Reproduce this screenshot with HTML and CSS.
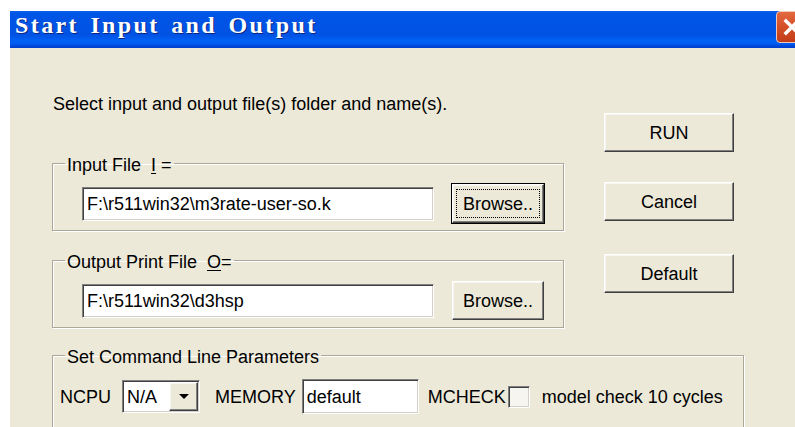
FILE: index.html
```html
<!DOCTYPE html>
<html>
<head>
<meta charset="utf-8">
<title>Start Input and Output</title>
<link rel="stylesheet" href="styles.css">
</head>
<body>
<div class="window">
  <div class="titlebar">
    <span class="title">Start Input and Output</span>
    <span class="close">
      <svg width="32" height="32" viewBox="0 0 32 32">
        <path d="M9.5 9.5 L22.5 22.5 M22.5 9.5 L9.5 22.5" stroke="#fff" stroke-width="3.6" stroke-linecap="square" fill="none"/>
      </svg>
    </span>
  </div>
  <div class="client">
    <div class="top">
      <div class="files">
        <p class="intro">Select input and output file(s) folder and name(s).</p>
        <fieldset class="group file-group">
          <legend>Input File&nbsp; <u>I</u> =</legend>
          <div class="file-row">
            <div class="edit path">F:\r511win32\m3rate-user-so.k</div>
            <div class="btn browse default"><span class="focus-ring">Browse..</span></div>
          </div>
        </fieldset>
        <fieldset class="group file-group">
          <legend>Output Print File&nbsp; <u>O</u>=</legend>
          <div class="file-row">
            <div class="edit path">F:\r511win32\d3hsp</div>
            <div class="btn browse">Browse..</div>
          </div>
        </fieldset>
      </div>
      <div class="actions">
        <div class="btn action">RUN</div>
        <div class="btn action cancel">Cancel</div>
        <div class="btn action reset">Default</div>
      </div>
    </div>
    <fieldset class="group params">
      <legend>Set Command Line Parameters</legend>
      <div class="param-row">
        <span class="plabel">NCPU</span>
        <div class="combo">
          <span class="combo-value">N/A</span>
          <span class="btn combo-btn">
            <svg width="10" height="6" viewBox="0 0 10 6"><polygon points="0,0 10,0 5,5" fill="#000"/></svg>
          </span>
        </div>
        <span class="plabel mem-label">MEMORY</span>
        <div class="edit mem">default</div>
        <span class="plabel mcheck">MCHECK</span>
        <span class="checkbox"></span>
        <span class="check-text">model check 10 cycles</span>
      </div>
    </fieldset>
  </div>
</div>
</body>
</html>
```
FILE: styles.css
```css
* {
  box-sizing: border-box;
}

html,
body {
  margin: 0;
  padding: 0;
  overflow: hidden;
  background: #fff;
}

body {
  font-family: "Liberation Sans", Arial, sans-serif;
  font-size: 18px;
  color: #000;
}

/* dialog frame */
.window {
  margin: 11px 0 0 10px;
  width: 802px;
  height: 430px;
  background: #ece9d8;
}

.titlebar {
  display: flex;
  height: 37px;
  background: linear-gradient(to bottom,
    #0a5fec 0, #0055e6 3px, #0052e2 24px, #0060f4 29px,
    #005cf0 33px, #0046d6 35px, #003fcf 37px);
}

.title {
  padding: 2px 0 0 5px;
  line-height: 24px;
  font-family: "Liberation Serif", "Times New Roman", serif;
  font-weight: bold;
  font-size: 24px;
  letter-spacing: 2.4px;
  word-spacing: 3px;
  color: #fff;
  text-shadow: 1px 1px 0 #0a2680;
  white-space: pre;
}

.close {
  margin-left: auto;
  margin-right: 4px;
  width: 32px;
  height: 32px;
  border: 1px solid #f0c8b8;
  border-radius: 4px;
  background: linear-gradient(to bottom, #e2683f, #d14b24 60%, #c23c18);
  display: flex;
  align-items: center;
  justify-content: center;
}

.close svg {
  display: block;
}

/* client area */
.client {
  padding: 46px 0 0 42px;
}

.top {
  display: flex;
  align-items: flex-start;
}

.files {
  width: 512px;
}

.intro {
  margin: 0 0 37px 1px;
  line-height: 20px;
}

/* etched group box */
.group {
  margin: 0;
  min-width: 0;
  padding: 9px 0 7px;
  border: 1px solid #aca899;
  box-shadow: 1px 1px 0 #fff, inset 1px 1px 0 #fff;
}

.group legend {
  margin-left: 12px;
  padding: 4px 2px 0;
  line-height: 20px;
}

.group u {
  text-underline-offset: 2px;
}

.file-group + .file-group {
  margin-top: 17px;
}

.file-row {
  display: flex;
  align-items: center;
  height: 39px;
  margin-left: 29px;
}

/* sunken edit field */
.edit {
  display: flex;
  align-items: center;
  height: 34px;
  padding: 0 4px;
  line-height: 20px;
  white-space: nowrap;
  background: #fff;
  border: 1px solid;
  border-color: #808080 #fff #fff #808080;
  box-shadow: inset 1px 1px 0 #404040, inset -1px -1px 0 #d4d0c8;
}

.path {
  width: 352px;
}

/* raised push button */
.btn {
  display: flex;
  align-items: center;
  justify-content: center;
  line-height: 20px;
  background: #ece9d8;
  border: 1px solid;
  border-color: #fff #404040 #404040 #fff;
  box-shadow: inset -1px -1px 0 #808080, inset 1px 1px 0 #f7f6f0;
}

.btn.default {
  box-shadow: 0 0 0 1px #000, inset -1px -1px 0 #808080, inset 1px 1px 0 #f7f6f0;
}

.focus-ring {
  flex: 1;
  align-self: stretch;
  display: flex;
  align-items: center;
  justify-content: center;
  margin: 4px 3px;
  border: 1px dotted #000;
}

.browse {
  width: 92px;
  height: 39px;
  margin-left: 18px;
}

.actions {
  display: flex;
  flex-direction: column;
  margin-left: 40px;
  padding-top: 19px;
}

.action {
  width: 130px;
  height: 39px;
}

.cancel {
  margin-top: 30px;
}

.reset {
  margin-top: 33px;
}

/* command line parameters */
.params {
  margin-top: 15px;
  width: 692px;
  padding: 12px 0 40px;
}

.param-row {
  display: flex;
  align-items: center;
  height: 35px;
  margin-left: 7px;
  line-height: 20px;
  white-space: nowrap;
}

.combo {
  display: flex;
  width: 78px;
  height: 33px;
  margin-left: 11px;
  padding: 1px;
  background: #fff;
  border: 1px solid;
  border-color: #808080 #fff #fff #808080;
  box-shadow: inset 1px 1px 0 #404040, inset -1px -1px 0 #d4d0c8;
}

.combo-value {
  flex: 1;
  display: flex;
  align-items: center;
  padding-left: 3px;
}

.combo-btn {
  width: 29px;
}

.mem-label {
  margin-left: 15px;
}

.mem {
  width: 117px;
  height: 35px;
  margin-left: 6px;
}

.mcheck {
  margin-left: 9px;
}

.checkbox {
  width: 22px;
  height: 22px;
  margin-left: 2px;
  background: #f6f5ef;
  border: 1px solid;
  border-color: #808080 #fff #fff #808080;
  box-shadow: inset 1px 1px 0 #404040, inset -1px -1px 0 #d4d0c8;
}

.check-text {
  margin-left: 12px;
}
```
